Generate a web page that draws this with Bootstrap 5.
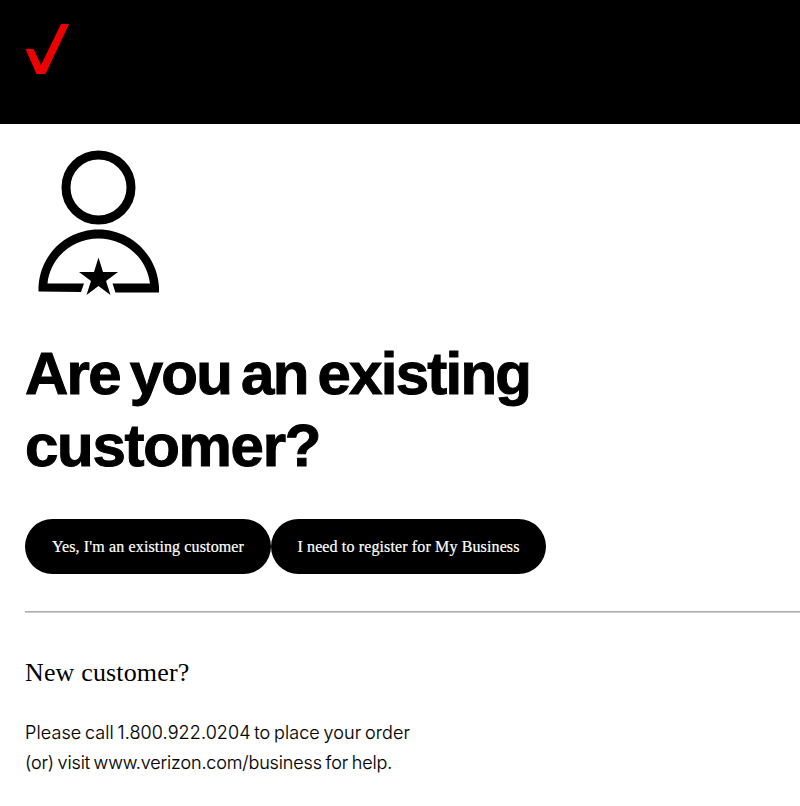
<!DOCTYPE html>
<html lang="en">
<head>
<meta charset="utf-8">
<meta name="viewport" content="width=device-width, initial-scale=1">
<title>Verizon Business</title>
<link href="https://cdn.jsdelivr.net/npm/bootstrap@5.3.0/dist/css/bootstrap.min.css" rel="stylesheet">
<style>
body{font-family:"Inter","Liberation Sans",sans-serif;color:#000;background:#fff;overflow:hidden}
.site-header{height:124px;background:#000;padding:24px 25px}
.page-body{padding:26px 0 0 25px}
.person{display:block;margin-left:13px}
.headline{font:700 60px/72px "Liberation Sans",Arial,sans-serif;letter-spacing:-1.75px;word-spacing:-5px;margin:43px 0 0;-webkit-text-stroke:1px #000}
.headline span:last-child{letter-spacing:-1.3px}
.headline span,.help-text span{display:block;width:max-content}
.choice{height:55px;border:0;border-radius:28px;background:#000;color:#fff;font:16px "Liberation Serif",serif;letter-spacing:.13px;padding:0;-webkit-text-stroke:.2px #fff}
.choice:hover{background:#222;color:#fff}
.choice-yes{width:246px}.choice-register{width:275px}
.choices{margin-top:37px}
.divider{border-top:1px solid #adadad;border-bottom:1px solid #ccc;opacity:1;margin:37px 0 0}
.new-customer{font:26px/32px "Liberation Serif",serif;letter-spacing:.15px;margin:44px 0 0}
.help-text{font-size:18px;font-weight:300;line-height:30px;margin:29px 0 0;letter-spacing:-.15px;word-spacing:-1.2px;-webkit-text-stroke:.15px #000}
.help-text span:first-child{letter-spacing:.11px;word-spacing:-1.6px}
</style>
</head>
<body>
<header class="site-header">
<svg class="d-block" width="44" height="50" viewBox="0 0 44 50"><path fill="#e00" d="M36 0h8L20.500 50h-9L.5 25h8L16 41z"/></svg>
</header>
<main class="page-body">
<svg class="person" width="122" height="145" viewBox="0 0 122 145"><g fill="none" stroke="#000" stroke-width="9"><circle cx="60.500" cy="37.500" r="32.500"/></g><path fill-rule="evenodd" d="M.5 141.500V137C2 105 28 79.500 60.500 79.500S119 105 121 137v5.500H77.500L74.500 133.500H112C109 108 87 88.500 60.500 88.500S12 108 9.500 133.500H46l-3 8.500z"/><path d="M60.500 107.500l4.500 14.500h15l-12 9 4.500 14-12-9-12 9 4.500-14-12-9h15z"/></svg>
<h1 class="headline"><span>Are you an existing</span><span>customer?</span></h1>
<div class="choices d-flex"><button class="btn choice choice-yes" type="button">Yes, I'm an existing customer</button><button class="btn choice choice-register" type="button">I need to register for My Business</button></div>
<hr class="divider">
<h2 class="new-customer">New customer?</h2>
<p class="help-text"><span>Please call 1.800.922.0204 to place your order</span><span>(or) visit www.verizon.com/business for help.</span></p>
</main>
<script src="https://cdn.jsdelivr.net/npm/bootstrap@5.3.0/dist/js/bootstrap.bundle.min.js"></script>
</body>
</html>
